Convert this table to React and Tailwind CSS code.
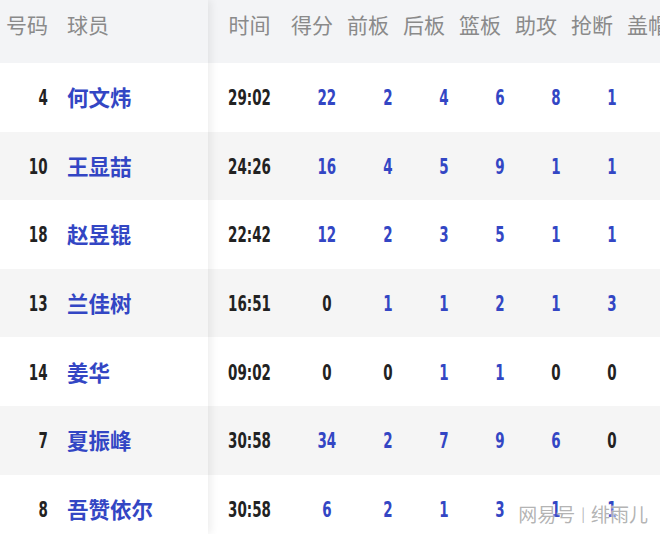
const players = [
  { no: 4, name: '何文炜', time: '29:02', stats: [22, 2, 4, 6, 8, 1, 0] },
  { no: 10, name: '王显喆', time: '24:26', stats: [16, 4, 5, 9, 1, 1, 0] },
  { no: 18, name: '赵昱锟', time: '22:42', stats: [12, 2, 3, 5, 1, 1, 0] },
  { no: 13, name: '兰佳树', time: '16:51', stats: [0, 1, 1, 2, 1, 3, 0] },
  { no: 14, name: '姜华', time: '09:02', stats: [0, 0, 1, 1, 0, 0, 0] },
  { no: 7, name: '夏振峰', time: '30:58', stats: [34, 2, 7, 9, 6, 0, 0] },
  { no: 8, name: '吾赞依尔', time: '30:58', stats: [6, 2, 1, 3, 1, 1, 0] },
]

const heads = ['得分', '前板', '后板', '篮板', '助攻', '抢断', '盖帽']

const cjk = "font-['Noto_Sans_CJK_SC','Noto_Sans',sans-serif]"
const num = "font-['DejaVu_Sans_Condensed',sans-serif] font-bold text-[22px] leading-none inline-block scale-x-[0.68] translate-y-[2px]"

function rowBg(i) {
  return i % 2 === 1 ? 'bg-[#f5f5f5]' : 'bg-white'
}

export default function App() {
  return (
    <div className="relative w-[660px] h-[534px] overflow-hidden bg-white flex">
      {/* left: number + name */}
      <div className="relative z-10 w-[208px] shrink-0 shadow-[3px_0_8px_rgba(0,0,0,0.07)]">
        <div className={`h-[63px] pb-[14px] bg-[#f3f4f6] flex items-center text-[21px] text-[#8a8a8a] ${cjk}`}>
          <span className="w-[48px] text-right">号码</span>
          <span className="ml-[19px]">球员</span>
        </div>
        {players.map((p, i) => (
          <div key={p.no} className={`h-[68.6px] flex items-center ${rowBg(i)}`}>
            <div className="w-[48px] text-right text-[#222]">
              <span className={`${num} origin-right`}>{p.no}</span>
            </div>
            <span className={`ml-[19px] text-[21.5px] font-semibold text-[#3346c4] ${cjk}`}>{p.name}</span>
          </div>
        ))}
      </div>

      {/* right: stats */}
      <div className="flex-1 min-w-0">
        <div className={`h-[63px] pb-[14px] bg-[#f3f4f6] flex items-center text-[21px] text-[#8a8a8a] whitespace-nowrap ${cjk}`}>
          <span className="w-[83px] shrink-0 text-center">时间</span>
          {heads.map((h) => (
            <span key={h} className="w-[56px] shrink-0">{h}</span>
          ))}
        </div>
        {players.map((p, i) => (
          <div key={p.no} className={`h-[68.6px] flex items-center ${rowBg(i)}`}>
            <div className="w-[83px] shrink-0 text-center text-[#222]">
              <span className={num}>{p.time}</span>
            </div>
            {p.stats.map((s, j) => (
              <div
                key={j}
                className={`w-[56px] shrink-0 text-center ${j === 0 ? 'pl-[16px]' : 'pl-[26px]'} ${s === 0 ? 'text-[#222]' : 'text-[#3346c4]'}`}
              >
                <span className={num}>{s}</span>
              </div>
            ))}
          </div>
        ))}
      </div>

      {/* watermark */}
      <div
        className={`absolute right-[12px] bottom-[6px] z-20 flex items-center gap-[6px] text-[19px] text-[#a0a0a0]/80 [text-shadow:0_0_2px_#fff,0_0_2px_#fff] ${cjk}`}
      >
        <span>网易号</span>
        <span className="text-[14px]">|</span>
        <span>绯雨儿</span>
      </div>
    </div>
  )
}
